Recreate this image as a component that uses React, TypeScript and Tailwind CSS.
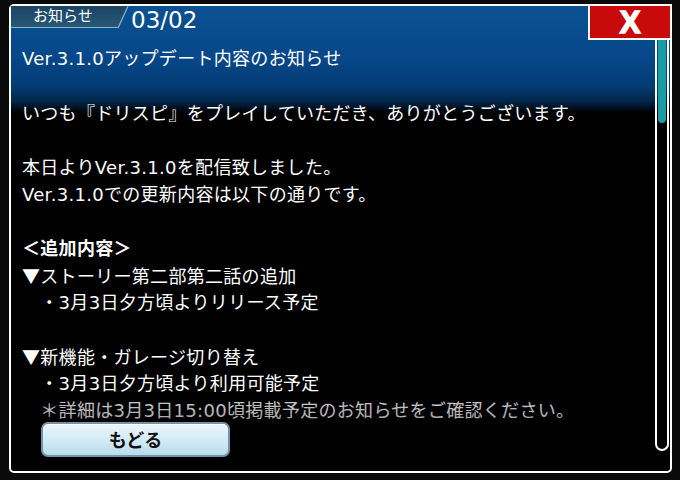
import React from "react";

const CJK = '"Noto Sans CJK JP", "Noto Sans", sans-serif';

const lines: { t: string; bold?: boolean; tri?: boolean }[] = [
  { t: "いつも『ドリスピ』をプレイしていただき、ありがとうございます。" },
  { t: "" },
  { t: "本日よりVer.3.1.0を配信致しました。" },
  { t: "Ver.3.1.0での更新内容は以下の通りです。" },
  { t: "" },
  { t: "＜追加内容＞", bold: true },
  { t: "ストーリー第二部第二話の追加", tri: true },
  { t: "　・3月3日夕方頃よりリリース予定" },
  { t: "" },
  { t: "新機能・ガレージ切り替え", tri: true },
  { t: "　・3月3日夕方頃より利用可能予定" },
  { t: "　＊詳細は3月3日15:00頃掲載予定のお知らせをご確認ください。" },
];

export default function App() {
  return (
    <div
      className="w-[680px] h-[480px] bg-[#0a0a0a] pt-[4px] pl-[9px] overflow-hidden"
      style={{ fontFamily: '"DejaVu Sans", "Noto Sans CJK JP", sans-serif' }}
    >
      <div className="relative w-[663px] h-[469px] border-2 border-white rounded-[5px] bg-[linear-gradient(180deg,#0b5192_0px,#06488a_50px,#033c74_80px,#012446_96px,#000_107px)] flex flex-col">
        {/* top row */}
        <div className="flex items-start h-[22px]">
          <div className="relative w-[118px] h-[22px]">
            <svg className="absolute inset-0" width="118" height="22" viewBox="0 0 118 22">
              <defs>
                <linearGradient id="tabg" x1="0" y1="0" x2="0" y2="1">
                  <stop offset="0" stopColor="#1b4463" />
                  <stop offset="1" stopColor="#275978" />
                </linearGradient>
              </defs>
              <polygon points="0,0 117,0 107,22 0,22" fill="url(#tabg)" />
              <line x1="0" y1="21.5" x2="107" y2="21.5" stroke="#8fb2c9" strokeWidth="1" />
              <line x1="117" y1="0" x2="107.2" y2="21.8" stroke="#8fb2c9" strokeWidth="1.2" />
            </svg>
            <span className="relative block pl-[22px] text-[15px] leading-[21px] text-white">お知らせ</span>
          </div>
          <span className="ml-[2px] mt-[-1px] text-[23px] leading-[30px] text-white">03/02</span>
        </div>
        {/* title */}
        <div className="mt-[17px] pl-[11px] text-[18px] leading-[27px] tracking-[0.3px] text-white whitespace-nowrap">
          Ver.3.1.0アップデート内容のお知らせ
        </div>
        {/* body */}
        <div className="relative mt-[28px] h-[321px] overflow-hidden pl-[11px] text-[18px] leading-[27px] tracking-[0.3px] text-white">
          {lines.map((l, i) => (
            <div key={i} className={`h-[27px] whitespace-nowrap ${l.bold ? "font-bold" : ""}`}>
              {l.tri && <span style={{ fontFamily: CJK }}>▼</span>}
              {l.t}
            </div>
          ))}
          <div className="absolute left-0 right-0 bottom-0 h-[23px] bg-[linear-gradient(180deg,rgba(0,0,0,0.2),rgba(0,0,0,0.35))]" />
        </div>
        {/* button */}
        <div className="mt-[1px] ml-[30px] w-[189px] h-[35px] rounded-[7px] border-2 border-[#7593a6] bg-[linear-gradient(180deg,#eaf6fc_0%,#d6edf8_45%,#b9dcec_100%)] shadow-[inset_0_1px_0_#ffffff] flex items-center justify-center">
          <span className="text-[18px] font-bold text-[#111]" style={{ fontFamily: CJK }}>
            もどる
          </span>
        </div>

        {/* scrollbar */}
        <div className="absolute right-[1px] top-[33px] w-[14px] h-[412px] border-2 border-t-0 border-white rounded-b-full overflow-hidden">
          <div className="mx-[1px] h-[84px] bg-[#1b9ba6] rounded-b-full" />
        </div>

        {/* close button */}
        <div
          className="absolute top-[-2px] right-[-2px] w-[84px] h-[36px] bg-[#c80a0a] border-2 border-white flex items-center justify-center text-white text-[31px] font-bold leading-none [-webkit-text-stroke:1.5px_white]"
          style={{ fontFamily: '"Liberation Sans", Arial, sans-serif' }}
        >
          X
        </div>
      </div>
    </div>
  );
}
